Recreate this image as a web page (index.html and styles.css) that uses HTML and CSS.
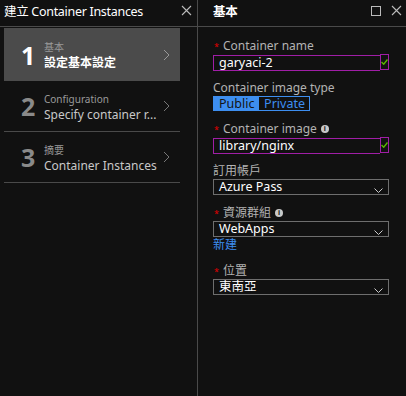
FILE: index.html
```html
<!doctype html>
<html lang="zh-Hant">
  <head>
    <meta charset="UTF-8" />
    <meta name="viewport" content="width=device-width, initial-scale=1.0">
    <title>建立 Container Instances</title>
    <link rel="stylesheet" href="styles.css">
  </head>
  <body>
    <div class="blade steps">
      <div class="blade-head">
        <span class="blade-title">建立 Container Instances</span>
        <span class="head-icons">
          <svg width="11" height="11" viewBox="0 0 11 11"><path d="M1 1L10 10M10 1L1 10" stroke="#bbb" stroke-width="1.1" fill="none"/></svg>
        </span>
      </div>
      <div class="step active">
        <div class="step-num">1</div>
        <div class="step-text">
          <div class="step-sub">基本</div>
          <div class="step-main">設定基本設定</div>
        </div>
        <svg class="chev" width="7" height="12" viewBox="0 0 7 12"><path d="M1 1L6 6L1 11" stroke="#999" stroke-width="1" fill="none"/></svg>
      </div>
      <div class="step">
        <div class="step-num">2</div>
        <div class="step-text">
          <div class="step-sub">Configuration</div>
          <div class="step-main">Specify container r...</div>
        </div>
        <svg class="chev" width="7" height="12" viewBox="0 0 7 12"><path d="M1 1L6 6L1 11" stroke="#777" stroke-width="1" fill="none"/></svg>
      </div>
      <div class="step">
        <div class="step-num">3</div>
        <div class="step-text">
          <div class="step-sub">摘要</div>
          <div class="step-main">Container Instances</div>
        </div>
        <svg class="chev" width="7" height="12" viewBox="0 0 7 12"><path d="M1 1L6 6L1 11" stroke="#777" stroke-width="1" fill="none"/></svg>
      </div>
    </div>

    <div class="blade form">
      <div class="blade-head">
        <span class="blade-title bold">基本</span>
        <span class="head-icons">
          <svg width="10" height="10" viewBox="0 0 10 10"><rect x="0.5" y="0.5" width="9" height="9" stroke="#bbb" fill="none"/></svg>
          <svg width="11" height="11" viewBox="0 0 11 11"><path d="M1 1L10 10M10 1L1 10" stroke="#bbb" stroke-width="1.1" fill="none"/></svg>
        </span>
      </div>
      <div class="fields">
        <div class="field">
          <div class="label"><span class="req">*</span>Container name</div>
          <div class="control valid">
            <div class="input">garyaci-2</div>
            <div class="check"><svg width="7" height="6" viewBox="0 0 7 6"><path d="M0.5 3L2.7 5.2L6.5 0.5" stroke="#5cb800" stroke-width="1.4" fill="none"/></svg></div>
          </div>
        </div>
        <div class="field">
          <div class="label">Container image type</div>
          <div class="toggle">
            <span class="opt on">Public</span><span class="opt">Private</span>
          </div>
        </div>
        <div class="field">
          <div class="label"><span class="req">*</span>Container image <span class="info">i</span></div>
          <div class="control valid">
            <div class="input">library/nginx</div>
            <div class="check"><svg width="7" height="6" viewBox="0 0 7 6"><path d="M0.5 3L2.7 5.2L6.5 0.5" stroke="#5cb800" stroke-width="1.4" fill="none"/></svg></div>
          </div>
        </div>
        <div class="field">
          <div class="label">訂用帳戶</div>
          <div class="select">Azure Pass<svg class="drop" width="9" height="5" viewBox="0 0 9 5"><path d="M0.5 0.5L4.5 4.5L8.5 0.5" stroke="#ccc" fill="none"/></svg></div>
        </div>
        <div class="field">
          <div class="label"><span class="req">*</span>資源群組 <span class="info">i</span></div>
          <div class="select">WebApps<svg class="drop" width="9" height="5" viewBox="0 0 9 5"><path d="M0.5 0.5L4.5 4.5L8.5 0.5" stroke="#ccc" fill="none"/></svg></div>
          <div class="link">新建</div>
        </div>
        <div class="field">
          <div class="label"><span class="req">*</span>位置</div>
          <div class="select">東南亞<svg class="drop" width="9" height="5" viewBox="0 0 9 5"><path d="M0.5 0.5L4.5 4.5L8.5 0.5" stroke="#ccc" fill="none"/></svg></div>
        </div>
      </div>
    </div>
  </body>
</html>
```

FILE: styles.css
```css
body {
  margin: 0;
  width: 406px;
  height: 396px;
  display: flex;
  background-color: #111111;
  font-family: "Noto Sans", "Noto Sans CJK TC", sans-serif;
  color: #ffffff;
  overflow: hidden;
}
.blade {
  height: 396px;
}
.steps {
  width: 197px;
  border-right: 1px solid #4a4a4a;
}
.form {
  flex: 1;
}
.blade-head {
  height: 26px;
  border-bottom: 1px solid #4a4a4a;
  display: flex;
  align-items: center;
  justify-content: space-between;
  padding: 0 5px 0 4px;
}
.form .blade-head {
  padding: 0 4px 0 15px;
}
.blade-title {
  font-size: 12.5px;
  letter-spacing: -0.3px;
  margin-top: -6px;
}
.bold {
  font-weight: bold;
}
.head-icons {
  display: flex;
  gap: 10px;
  align-items: center;
  margin-top: -5px;
}
.step {
  width: 176px;
  height: 51px;
  margin-left: 4px;
  border-bottom: 1px solid #4a4a4a;
  display: flex;
  align-items: center;
  box-sizing: border-box;
}
.step.active {
  height: 53px;
  margin-top: 1px;
  background-color: #4b4b4b;
  border-bottom: none;
}
.step-num {
  width: 40px;
  padding-left: 17px;
  box-sizing: border-box;
  font-size: 25px;
  font-weight: bold;
  color: #8a8a8a;
}
.active .step-num {
  color: #ffffff;
}
.step-text {
  flex: 1;
  padding-top: 2px;
}
.step-sub {
  font-size: 10px;
  line-height: 14px;
  color: #9a9a9a;
}
.step-main {
  font-size: 12px;
  line-height: 17px;
  color: #c8c8c8;
}
.active .step-main {
  color: #ffffff;
  font-weight: bold;
}
.chev {
  margin-right: 10px;
}
.fields {
  padding: 11px 17px 0 15px;
}
.field {
  margin-bottom: 10px;
}
.label {
  height: 16px;
  line-height: 16px;
  font-size: 12px;
  color: #b3b3b3;
  display: flex;
  align-items: center;
}
.req {
  color: #e00000;
  font-size: 9px;
  margin: 2px 4px 0 1px;
}
.info {
  display: inline-block;
  width: 8px;
  height: 8px;
  border-radius: 50%;
  background-color: #c8c8c8;
  color: #111111;
  font-size: 7px;
  line-height: 8px;
  text-align: center;
  font-weight: bold;
  margin-left: 4px;
}
.control {
  display: flex;
  height: 16px;
}
.input {
  flex: 1;
  border: 1px solid #a01ea6;
  border-right: none;
  height: 14px;
  margin-top: 1px;
  padding-left: 5px;
  font-size: 12.5px;
  line-height: 14px;
}
.check {
  width: 7px;
  height: 14px;
  border: 1px solid #a01ea6;
  display: flex;
  align-items: center;
  justify-content: center;
}
.toggle {
  display: flex;
  width: 97px;
  height: 15px;
  border: 1px solid #3d8ef0;
  box-sizing: border-box;
  font-size: 12.5px;
  line-height: 13px;
}
.opt {
  padding: 0 4px 0 5px;
  color: #3d8ef0;
}
.opt.on {
  background-color: #3d8ef0;
  color: #141414;
  width: 37px;
}
.select {
  position: relative;
  height: 16px;
  border: 1px solid #6e6e6e;
  box-sizing: border-box;
  padding-left: 5px;
  font-size: 12.5px;
  line-height: 14px;
}
.drop {
  position: absolute;
  right: 5px;
  bottom: 1px;
}
.link {
  font-size: 12px;
  color: #3d8ef0;
  line-height: 16px;
}
```
